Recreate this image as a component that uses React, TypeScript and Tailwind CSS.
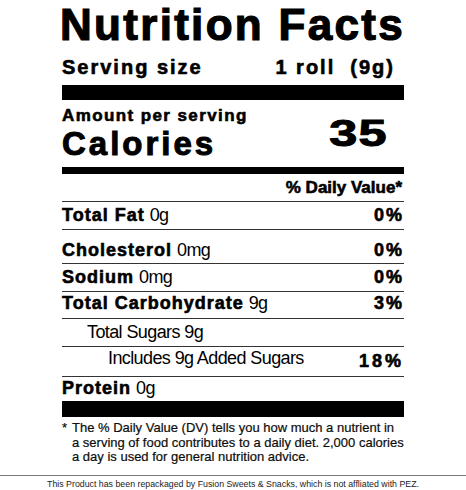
const rows = [
  { label: "Total Fat", value: "0g", dv: "0%", box: "pt-[2px] pb-[3px]" },
  { label: "Cholesterol", value: "0mg", dv: "0%", box: "pt-[9px] pb-[2px]" },
  { label: "Sodium", value: "0mg", dv: "0%", box: "pt-[2px] pb-[3px]" },
  { label: "Total Carbohydrate", value: "9g", dv: "3%", box: "pt-0 pb-[4px]" },
];

const heavy = "font-bold [-webkit-text-stroke:0.6px_black]";

const App = () => {
  return (
    <div className="w-[466px] h-[490px] bg-white text-black font-['Liberation_Sans',Arial,sans-serif] overflow-hidden">
      <div className="w-[342px] mx-auto">
        <h1 className="-ml-[2px] -mr-[12px] whitespace-nowrap text-[44px] leading-[50px] tracking-[2.3px] font-bold [-webkit-text-stroke:1.2px_black]">
          Nutrition Facts
        </h1>

        <div className={`flex justify-between pt-[5px] pb-[6px] text-[20px] leading-[24px] tracking-[2px] ${heavy}`}>
          <span>Serving size</span>
          <span className="whitespace-pre pr-[9px]">1 roll  (9g)</span>
        </div>

        <div className="h-[15px] bg-black" />

        <p className={`pt-[6px] text-[17px] leading-[20px] tracking-[1.4px] ${heavy}`}>Amount per serving</p>

        <div className="flex justify-between items-start">
          <span className="text-[33px] leading-[36px] tracking-[3px] font-bold [-webkit-text-stroke:1px_black]">
            Calories
          </span>
          <span className="mr-[16px] inline-block origin-right scale-x-[1.4] text-[36px] leading-[16px] tracking-[1px] font-bold [-webkit-text-stroke:1px_black]">
            35
          </span>
        </div>

        <div className="mt-[5px] h-[7px] bg-black" />

        <div className={`pt-[4px] pb-[3px] text-right pr-[2px] text-[17px] leading-[20px] ${heavy}`}>
          % Daily Value*
        </div>

        <div className="border-t border-[#333]">
          {rows.map((r) => (
            <div
              key={r.label}
              className={`flex justify-between border-b border-[#333] ${r.box} text-[18px] leading-[22px]`}
            >
              <span>
                <span className={`tracking-[1px] ${heavy}`}>{r.label}</span>{" "}
                <span className="tracking-[-0.6px]">{r.value}</span>
              </span>
              <span className={`tracking-[2px] ${heavy}`}>{r.dv}</span>
            </div>
          ))}

          <div className="border-b border-[#333] pt-[2px] pb-[3px] pl-[25px] text-[18px] leading-[22px] tracking-[-0.6px]">
            Total Sugars 9g
          </div>

          <div className="flex justify-between items-start border-b border-[#333] pb-[4px] text-[18px] leading-[22px]">
            <span className="pl-[46px] tracking-[-0.6px]">Includes 9g Added Sugars</span>
            <span className={`pt-[3px] tracking-[3px] ${heavy}`}>18%</span>
          </div>

          <div className="pb-[2px] text-[18px] leading-[22px]">
            <span className={`tracking-[1px] ${heavy}`}>Protein</span>{" "}
            <span className="tracking-[-0.6px]">0g</span>
          </div>
        </div>

        <div className="h-[16px] bg-black" />

        <div className="flex pt-[4px] text-[13px] leading-[14.5px] text-[#111] [-webkit-text-stroke:0.2px_black]">
          <span className="w-[10px] shrink-0">*</span>
          <p>
            The % Daily Value (DV) tells you how much a nutrient in a serving of food contributes to a daily diet. 2,000
            calories a day is used for general nutrition advice.
          </p>
        </div>
      </div>

      <div className="mt-[10px] border-t border-[#777]" />
      <p className="text-center text-[8.8px] leading-[16px] text-[#222]">
        This Product has been repackaged by Fusion Sweets &amp; Snacks, which is not affliated with PEZ.
      </p>
    </div>
  );
};

export default App;
